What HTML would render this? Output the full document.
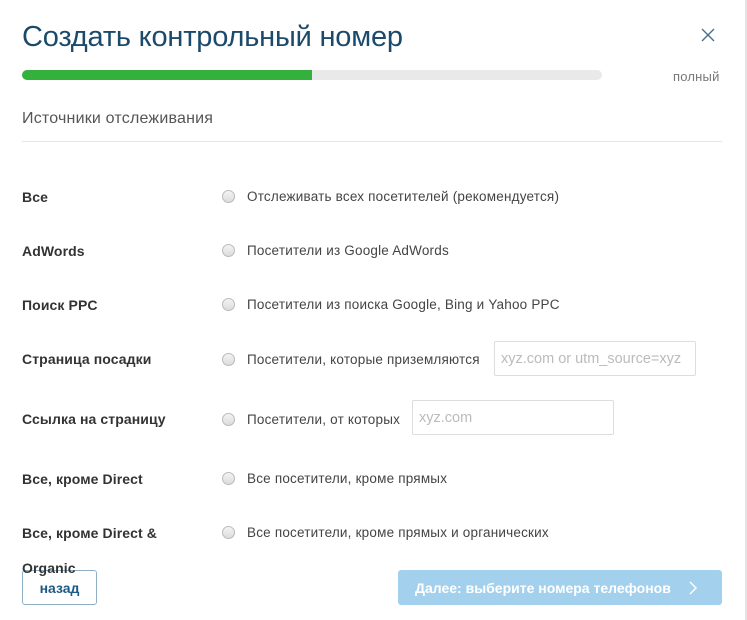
<!DOCTYPE html>
<html><head><meta charset="utf-8"><style>
body{margin:0;width:747px;height:620px;background:#fff;position:relative;overflow:hidden;font-family:"Liberation Sans","DejaVu Sans",sans-serif;}
.a{position:absolute;white-space:nowrap;}
.t{left:22px;top:21px;font-size:29px;color:#1b4a6b;letter-spacing:-0.2px;}
.lab{left:22px;font-size:14px;font-weight:bold;color:#333;letter-spacing:0.1px;}
.txt{left:247px;font-size:13.5px;color:#444;letter-spacing:0.2px;}
.r{left:222px;width:11px;height:11px;border-radius:50%;border:1px solid #bbb;background:linear-gradient(#f3f3f3,#dcdcdc);}
.in{border:1px solid #ddd;border-radius:2px;font-size:14.5px;color:#bbb;padding-left:6px;line-height:34px;box-sizing:border-box;height:35px;letter-spacing:0px;}
</style></head><body>
<div class="a t">Создать контрольный номер</div>
<svg class="a" style="left:701px;top:28px" width="14" height="14"><path d="M1 1L13 13M13 1L1 13" stroke="#4a6f8c" stroke-width="1.4"/></svg>
<div class="a" style="left:22px;top:70px;width:580px;height:10px;border-radius:5px;background:#e9e9e9"></div>
<div class="a" style="left:22px;top:70px;width:290px;height:10px;border-radius:5px 0 0 5px;background:#34b03d"></div>
<div class="a" style="left:673px;top:69px;font-size:13px;color:#777;letter-spacing:0.2px">полный</div>
<div class="a" style="left:22px;top:110px;font-size:16px;color:#555;letter-spacing:0.2px">Источники отслеживания</div>
<div class="a" style="left:22px;top:141px;width:700px;height:1px;background:#e6e6e6"></div>
<div class="a" style="left:745px;top:0;width:2px;height:620px;background:#e4e4e4"></div>

<div class="a lab" style="top:189px">Все</div><div class="a r" style="top:190px"></div><div class="a txt" style="top:189px">Отслеживать всех посетителей (рекомендуется)</div>
<div class="a lab" style="top:243px">AdWords</div><div class="a r" style="top:244px"></div><div class="a txt" style="top:243px">Посетители из Google AdWords</div>
<div class="a lab" style="top:297px">Поиск PPC</div><div class="a r" style="top:298px"></div><div class="a txt" style="top:297px">Посетители из поиска Google, Bing и Yahoo PPC</div>
<div class="a lab" style="top:351px">Страница посадки</div><div class="a r" style="top:353px"></div><div class="a txt" style="top:352px">Посетители, которые приземляются</div>
<div class="a in" style="left:494px;top:341px;width:202px">xyz.com or utm_source=xyz</div>
<div class="a lab" style="top:411px">Ссылка на страницу</div><div class="a r" style="top:413px"></div><div class="a txt" style="top:412px">Посетители, от которых</div>
<div class="a in" style="left:412px;top:400px;width:202px">xyz.com</div>
<div class="a lab" style="top:471px">Все, кроме Direct</div><div class="a r" style="top:472px"></div><div class="a txt" style="top:471px">Все посетители, кроме прямых</div>
<div class="a lab" style="top:525px">Все, кроме Direct &amp;</div><div class="a r" style="top:526px"></div><div class="a txt" style="top:525px">Все посетители, кроме прямых и органических</div>

<div class="a" style="left:22px;top:570px;width:75px;height:35px;box-sizing:border-box;border:1px solid #8fb0c4;border-radius:3px;background:#fff;color:#1b5a86;font-weight:bold;font-size:14px;text-align:center;line-height:35px;letter-spacing:0px">назад</div>
<div class="a lab" style="top:560px;z-index:2">Organic</div>
<div class="a" style="left:398px;top:570px;width:324px;height:35px;border-radius:3px;background:#a3d0ec;color:#fff;font-weight:bold;font-size:14px;line-height:37px;letter-spacing:0px"><span style="position:absolute;left:17px">Далее: выберите номера телефонов</span>
<svg style="position:absolute;left:290px;top:11px" width="10" height="14"><path d="M2 1L8 7L2 13" fill="none" stroke="#fff" stroke-width="1.5"/></svg></div>
</body></html>
